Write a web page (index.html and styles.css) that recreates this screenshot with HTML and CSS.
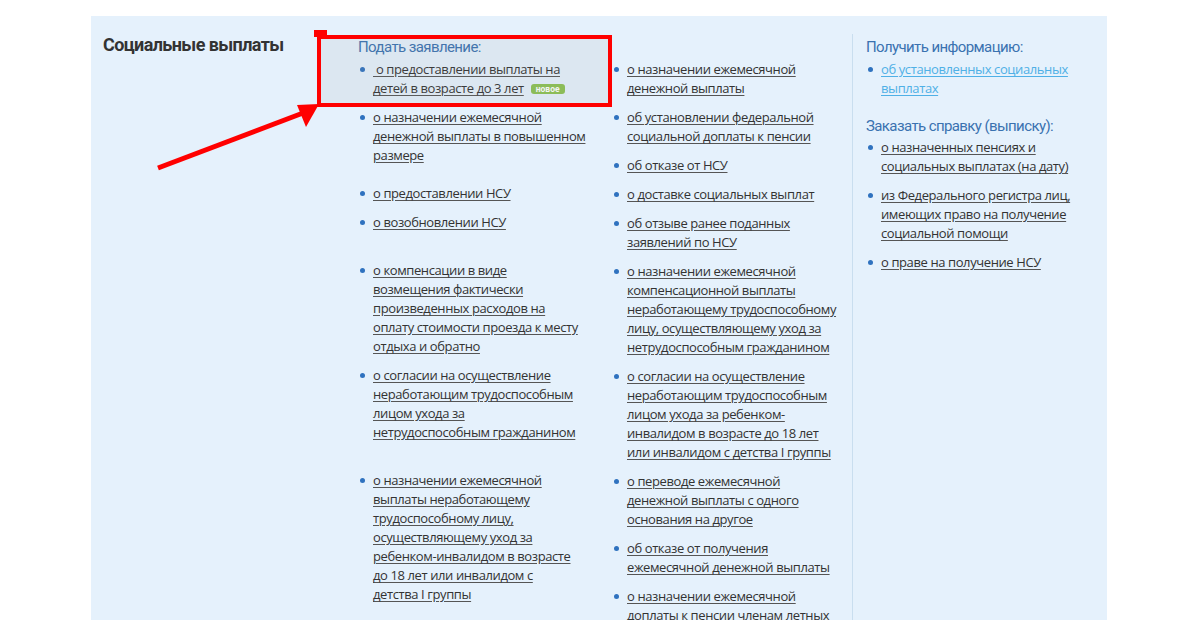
FILE: index.html
```html
<!DOCTYPE html>
<html lang="ru">
<head>
<meta charset="utf-8">
<title>Социальные выплаты</title>
<link rel="stylesheet" href="styles.css">
</head>
<body>
<div class="panel">
  <div class="title">Социальные выплаты</div>

  <div class="col col-first">
    <div class="col-head">Подать заявление:</div>
    <ul class="links">
      <li><a href="#">&nbsp;о предоставлении выплаты на детей в возрасте до 3 лет</a> <span class="badge">новое</span></li>
      <li><a href="#">о назначении ежемесячной денежной выплаты в повышенном размере</a></li>
      <li class="gap-s"><a href="#">о предоставлении НСУ</a></li>
      <li><a href="#">о возобновлении НСУ</a></li>
      <li class="gap-l"><a href="#">о компенсации в виде возмещения фактически произведенных расходов на оплату стоимости проезда к месту отдыха и обратно</a></li>
      <li><a href="#">о согласии на осуществление неработающим трудоспособным лицом ухода за нетрудоспособным&nbsp;гражданином</a></li>
      <li class="gap-l"><a href="#">о назначении ежемесячной выплаты неработающему трудоспособному лицу, осуществляющему уход за ребенком-инвалидом в возрасте до 18 лет или инвалидом с детства&nbsp;I&nbsp;группы</a></li>
    </ul>
  </div>

  <div class="col col-second">
    <ul class="links">
      <li><a href="#">о назначении ежемесячной денежной выплаты</a></li>
      <li><a href="#">об установлении федеральной социальной доплаты к пенсии</a></li>
      <li><a href="#">об отказе от НСУ</a></li>
      <li><a href="#">о доставке социальных выплат</a></li>
      <li><a href="#">об отзыве ранее поданных заявлений по НСУ</a></li>
      <li><a href="#">о назначении ежемесячной компенсационной выплаты неработающему трудоспособному лицу, осуществляющему уход за нетрудоспособным гражданином</a></li>
      <li><a href="#">о согласии на осуществление неработающим трудоспособным лицом ухода за ребенком-инвалидом в возрасте до 18 лет или инвалидом с детства I группы</a></li>
      <li><a href="#">о переводе ежемесячной денежной выплаты с одного основания на другое</a></li>
      <li><a href="#">об отказе от получения ежемесячной денежной выплаты</a></li>
      <li><a href="#">о назначении ежемесячной доплаты к пенсии членам летных экипажей воздушных судов гражданской авиации</a></li>
    </ul>
  </div>

  <div class="col col-side">
    <div class="col-head">Получить информацию:</div>
    <ul class="links">
      <li><a href="#" class="visited">об установленных социальных выплатах</a></li>
    </ul>
    <div class="col-head col-head-next">Заказать справку (выписку):</div>
    <ul class="links">
      <li><a href="#">о назначенных пенсиях и социальных выплатах (на дату)</a></li>
      <li><a href="#">из Федерального регистра лиц, имеющих право на получение социальной помощи</a></li>
      <li><a href="#">о праве на получение НСУ</a></li>
    </ul>
  </div>
</div>

<div class="highlight"></div>
<div class="highlight-tab"></div>
<svg class="arrow" width="1200" height="620" viewBox="0 0 1200 620">
  <line x1="158" y1="168" x2="303" y2="113" stroke="#ff0000" stroke-width="5"/>
  <polygon points="319,104 297,105 306,127" fill="#ff0000"/>
</svg>
</body>
</html>
```

FILE: styles.css
```css
html, body {
  margin: 0;
  padding: 0;
  background: #ffffff;
}

body {
  font-family: "Open Sans", "Noto Sans", sans-serif;
  color: #333333;
  overflow: hidden;
  height: 620px;
  position: relative;
}

.panel {
  margin: 16px 0 0 91px;
  width: 1016px;
  min-height: 620px;
  background: #e5f1fc;
  display: flex;
  align-items: stretch;
}

.title {
  width: 255px;
  padding: 18px 0 0 12px;
  font-family: Roboto, "Liberation Sans", sans-serif;
  font-weight: 700;
  font-size: 18px;
  line-height: 22px;
  letter-spacing: -0.6px;
  color: #333333;
}

.col {
  padding-top: 21px;
  box-sizing: border-box;
}

.col-first {
  width: 254px;
  padding-right: 26px;
}

.col-second {
  width: 240px;
  padding-top: 44px;
  padding-right: 12px;
}

.col-side {
  flex: 1;
  border-left: 1px solid #c9deef;
  margin-top: 18px;
  padding-top: 3px;
  padding-left: 13px;
  padding-right: 26px;
}

.col-head {
  font-family: Roboto, "Liberation Sans", sans-serif;
  font-size: 15px;
  line-height: 20px;
  letter-spacing: -0.6px;
  color: #3a72b0;
  margin-bottom: 3px;
}

.col-head-next {
  margin-top: 18px;
  margin-bottom: 2px;
}

.links {
  list-style: none;
  margin: 0;
  padding: 0;
}

.links li {
  position: relative;
  padding-left: 15px;
  font-size: 13px;
  line-height: 19px;
  letter-spacing: -0.4px;
  margin-bottom: 10px;
}

.links li::before {
  content: "";
  position: absolute;
  left: 2px;
  top: 7px;
  width: 5px;
  height: 5px;
  border-radius: 50%;
  background: #2f72bf;
}

.links li.gap-s {
  margin-top: 19px;
}

.links li.gap-l {
  margin-top: 29px;
}

.links a {
  color: #333333;
  text-decoration: underline;
  text-decoration-color: #555555;
  text-underline-offset: 2px;
}

.links a.visited {
  color: #4fb0e6;
  text-decoration-color: #4fb0e6;
}

.badge {
  display: inline-block;
  vertical-align: 1px;
  background: #8cc152;
  color: #ffffff;
  font-family: Roboto, "Liberation Sans", sans-serif;
  font-weight: 700;
  font-size: 8.5px;
  line-height: 10px;
  letter-spacing: 0;
  padding: 0 5px;
  border-radius: 3px;
  margin-left: 4px;
}

.highlight {
  position: absolute;
  left: 317px;
  top: 35px;
  width: 287px;
  height: 64px;
  border: 4px solid #ff0000;
  background: rgba(150, 150, 150, 0.1);
}

.highlight-tab {
  position: absolute;
  left: 314px;
  top: 30px;
  width: 13px;
  height: 7px;
  background: #ff0000;
}

.arrow {
  position: absolute;
  left: 0;
  top: 0;
  pointer-events: none;
}
```
